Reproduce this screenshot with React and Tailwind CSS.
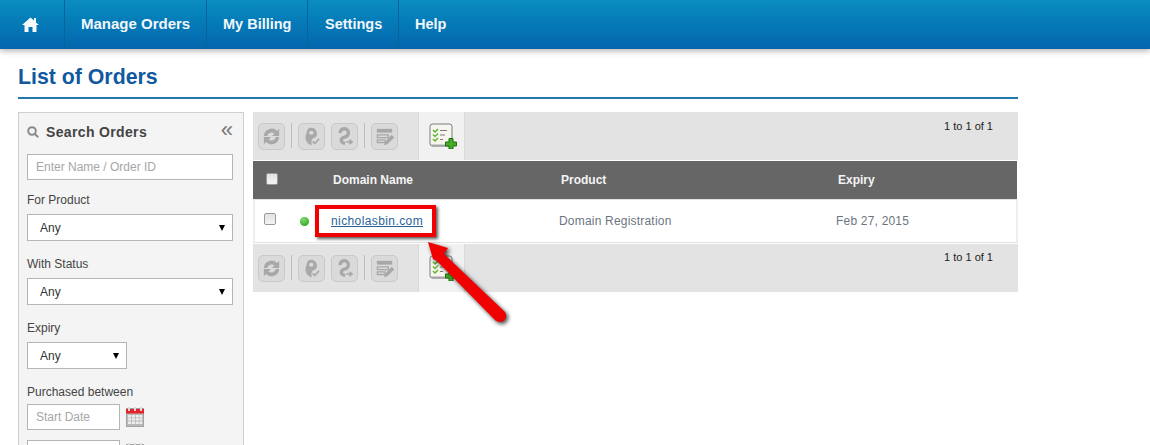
import React from "react";

const Tool = ({ children }) => (
  <div className="w-[27px] h-[27px] rounded-[5px] border border-[#c9c9c9] bg-[#dadada] flex items-center justify-center">
    <svg width="23" height="23" viewBox="0 0 21 21" fill="none">{children}</svg>
  </div>
);

const Sep = () => <div className="w-px h-[25px] bg-[#bdbdbd]" />;

const AddIcon = () => (
  <svg width="30" height="26" viewBox="0 0 30 26" fill="none">
    <rect x="3" y="1" width="22" height="22" rx="2.5" fill="#f6f6ee" stroke="#7a7a7a" strokeWidth="1" />
    <path d="M3.5 21.5 H24.5 V23.5 H5 Z" fill="#a5a5a5" />
    <path d="M6 7 l2 2 l3-3 M6 11.5 l2 2 l3-3 M6 16 l2 2 l3-3" stroke="#62b32f" strokeWidth="1.5" />
    <path d="M13 7.5 h7 M13 12 h5 M13 16.5 h3" stroke="#7b7b7b" strokeWidth="1" />
    <path d="M22 15.5 h4 v3.5 h3.5 v4 h-3.5 v3 h-4 v-3 h-3.5 v-4 h3.5 Z" fill="#45ad24" stroke="#1f6d10" strokeWidth="1" />
  </svg>
);

const Toolbar = ({ pager }) => (
  <div className="flex h-[48px] bg-[#e3e3e3]">
    <div className="flex items-start gap-[6px] pl-[5px] pt-[11px] w-[165px]">
      <Tool>
        <path d="M3.5 10 A7 7 0 0 1 15.5 5.5 L17.5 3.5 V10 H11 L13.2 7.8 A4 4 0 0 0 6.6 10 Z" fill="#a8a8a8" />
        <path d="M17.5 11 A7 7 0 0 1 5.5 15.5 L3.5 17.5 V11 H10 L7.8 13.2 A4 4 0 0 0 14.4 11 Z" fill="#a8a8a8" />
      </Tool>
      <Sep />
      <Tool>
        <path d="M10 2.5 C13.5 2.5 15.5 5 15.5 8 C15.5 9.5 15 10.5 14 11.5 C12 12 10.5 13 10.5 15 L10.5 18.5 C7 17.5 5 14.5 5 11.5 C5 9.5 5.5 8.5 6 7.5 C6 4.5 8 2.5 10 2.5 Z" fill="#a8a8a8" />
        <ellipse cx="10.3" cy="7" rx="2" ry="1.8" fill="#dadada" />
        <path d="M11.5 15 l2 2 l4-4.5" stroke="#a8a8a8" strokeWidth="1.5" />
      </Tool>
      <Tool>
        <path d="M6.5 7.5 A3.8 3.8 0 1 1 10.5 11 C8.5 11.5 7.5 12.5 7.5 14 C7.5 15.5 9 16.5 11 17" stroke="#a8a8a8" strokeWidth="3" />
        <path d="M12 15.5 h4.5 M15 13.5 l2.5 2 l-2.5 2" stroke="#a8a8a8" strokeWidth="1.4" />
      </Tool>
      <Sep />
      <Tool>
        <path d="M3.5 3.5 h14 v3.5 h-14 Z" fill="#a8a8a8" />
        <path d="M4 9 h10 v2.5 h-10 Z M4 13.5 h7 v2.5 h-7 Z" stroke="#a8a8a8" strokeWidth="1.2" />
        <path d="M10 18.5 l1-3 l6-6.5 l2.5 2.5 l-6.5 6 Z" fill="#a8a8a8" />
      </Tool>
    </div>
    <div className="w-[47px] bg-[#f1f1f1] border-x border-[#dadada] flex justify-center pt-[11px]">
      <AddIcon />
    </div>
    <div className={`flex-1 flex justify-end pr-[25px] ${pager} text-[11px] leading-[13px] text-[#222]`}>
      1 to 1 of 1
    </div>
  </div>
);

const Checkbox = () => (
  <div className="w-[12px] h-[12px] rounded-[2px] border border-[#9a9a9a] bg-gradient-to-b from-[#e2e2e2] to-[#f4f4f4]" />
);

const Select = ({ w }) => (
  <div className={`${w} h-[27px] bg-white border border-[#b5b5b5] flex items-center justify-between pl-[12px] pr-[7px] text-[12px] text-[#333]`}>
    <span>Any</span>
    <span className="w-0 h-0 border-x-[3.5px] border-x-transparent border-t-[6px] border-t-black" />
  </div>
);

const Calendar = () => (
  <svg width="18" height="20" viewBox="0 0 18 20" className="shrink-0">
    <rect x="0.5" y="1.5" width="17" height="18" fill="#b9b9b9" stroke="#a3a3a3" />
    <rect x="0" y="2" width="18" height="4.5" fill="#e3232c" />
    <path d="M3 0 v4 M9 0 v4 M15 0 v4" stroke="#dcdcdc" strokeWidth="2" />
    <path d="M2 8 h3.2 v2.4 h-3.2 Z M6 8 h3 v2.4 h-3 Z M9.8 8 h3 v2.4 h-3 Z M13.4 8 h2.8 v2.4 h-2.8 Z M2 11.2 h3.2 v2.4 h-3.2 Z M6 11.2 h3 v2.4 h-3 Z M9.8 11.2 h3 v2.4 h-3 Z M13.4 11.2 h2.8 v2.4 h-2.8 Z M2 14.4 h3.2 v2.6 h-3.2 Z M6 14.4 h3 v2.6 h-3 Z M9.8 14.4 h3 v2.6 h-3 Z M13.4 14.4 h2.8 v2.6 h-2.8 Z" fill="#eeeeee" />
  </svg>
);

const TextBox = ({ w, children }) => (
  <div className={`${w} h-[26px] bg-white border border-[#b5b5b5] flex items-center pl-[8px] text-[12px] text-[#a6a6a6]`}>
    {children}
  </div>
);

const navItems = [
  { t: "Manage Orders", c: "w-[142px] pl-[16px] text-[15px] border-r" },
  { t: "My Billing", c: "w-[101px] pl-[16px] text-[14.5px] border-r" },
  { t: "Settings", c: "w-[91px] pl-[17px] text-[14.5px] border-r" },
  { t: "Help", c: "pl-[16px] text-[14.5px]" },
];

export default function App() {
  return (
    <div className="w-[1150px] h-[445px] overflow-hidden bg-white relative font-['Liberation_Sans',Arial,sans-serif]">
      <nav className="h-[49px] flex bg-gradient-to-b from-[#0a8dbf] to-[#0565ae] shadow-[0_2px_6px_rgba(0,0,0,0.3)]">
        <div className="w-[65px] border-r border-[#05659a] flex items-center justify-center pb-[1px] pr-[3px]">
          <svg width="17" height="15" viewBox="0 0 17 15" fill="#f4f8fb">
            <path d="M8.5 0.5 L12 3.6 V1 H14 V5.4 L17 8 H14.5 V15 H10.5 V10 H6.5 V15 H2.5 V8 H0 Z" />
          </svg>
        </div>
        {navItems.map(({ t, c }) => (
          <div key={t} className={`${c} border-[#05659a] flex items-center font-bold text-[#f2f7fb]`}>
            {t}
          </div>
        ))}
      </nav>

      <main className="w-[1000px] ml-[18px]">
        <h1 className="h-[50px] pt-[16px] border-b-2 border-[#2278ab] text-[21.3px] leading-[25px] font-bold text-[#10599f]">
          List of Orders
        </h1>
        <div className="flex gap-[9px] mt-[13px] items-start">
          <aside className="w-[226px] h-[400px] shrink-0 border border-[#cfcfcf] bg-[#f4f4f4] pl-[8px] pr-[10px] text-[12px] text-[#444]">
            <div className="flex items-center justify-between h-[41px] pb-[2px]">
              <div className="flex items-center gap-[7px]">
                <svg width="12" height="12" viewBox="0 0 12 12" fill="none" stroke="#8b8b8b" strokeWidth="2" className="-mt-[1px]">
                  <circle cx="5" cy="5" r="3.8" />
                  <path d="M8 8 L11.2 11.2" />
                </svg>
                <span className="text-[14px] font-bold tracking-[0.35px] text-[#444]">Search Orders</span>
              </div>
              <span className="text-[22px] leading-[18px] text-[#777] pb-[5px]">«</span>
            </div>
            <TextBox w="w-full">Enter Name / Order ID</TextBox>
            <div className="mt-[14px] mb-[7px] leading-[13px]">For Product</div>
            <Select w="w-full" />
            <div className="mt-[17px] mb-[7px] leading-[13px]">With Status</div>
            <Select w="w-full" />
            <div className="mt-[17px] mb-[7px] leading-[13px]">Expiry</div>
            <Select w="w-[100px]" />
            <div className="mt-[17px] mb-[5px] leading-[13px]">Purchased between</div>
            <div className="flex items-center gap-[6px]">
              <TextBox w="w-[93px]">Start Date</TextBox>
              <Calendar />
            </div>
            <div className="flex items-center gap-[6px] mt-[10px]">
              <TextBox w="w-[93px]"></TextBox>
              <Calendar />
            </div>
          </aside>

          <section className="flex-1 flex flex-col gap-px">
            <Toolbar pager="pt-[8px]" />
            <div>
              <div className="h-[38px] bg-[#666] border-r border-white flex items-center text-[12px] font-bold text-[#f4f4f4]">
                <div className="w-[80px] pl-[13px] pb-[3px]"><Checkbox /></div>
                <div className="w-[228px]">Domain Name</div>
                <div className="w-[277px]">Product</div>
                <div>Expiry</div>
              </div>
              <div className="h-[44px] border-x-2 border-y border-x-[#eeeeee] border-y-[#e2e2e2] bg-white flex items-center text-[12px] tracking-[0.2px] text-[#6c757f]">
                <div className="w-[34px] pl-[9px] pb-[4px]"><Checkbox /></div>
                <div className="w-[42px] flex pl-[11px]">
                  <span className="w-[9px] h-[9px] rounded-full bg-[radial-gradient(circle_at_40%_30%,#7fdc68,#1f9a12)]" />
                </div>
                <a className="w-[228px] text-[#2b5f97] underline tracking-[0.4px] pb-[1px]">nicholasbin.com</a>
                <div className="w-[277px] pb-[1px]">Domain Registration</div>
                <div className="pb-[1px]">Feb 27, 2015</div>
              </div>
            </div>
            <Toolbar pager="pt-[7px]" />
          </section>
        </div>
      </main>

      {/* annotation overlays */}
      <div className="absolute left-[315px] top-[205px] w-[121px] h-[32px] border-[4px] border-[#f00000] shadow-[2px_2px_3px_rgba(0,0,0,0.65)]" />
      <svg className="absolute left-[420px] top-[235px] drop-shadow-[2px_2px_2px_rgba(0,0,0,0.75)]" width="95" height="95" viewBox="0 0 95 95" fill="none">
        <path d="M8 7 L28 13 L24 19 L85 77 Q88 82 83.5 86 Q79 88 75.5 85.5 L17 26 L13 24 Z" fill="#f00000" />
      </svg>
    </div>
  );
}
